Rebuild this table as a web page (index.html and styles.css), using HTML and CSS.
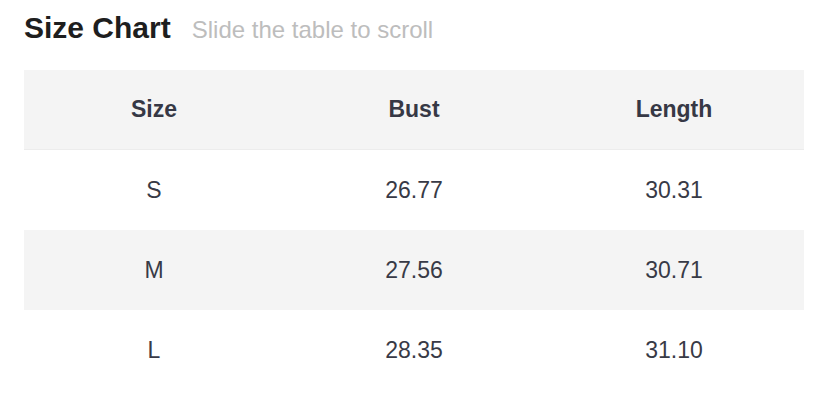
FILE: index.html
```html
<!DOCTYPE html>
<html>
<head>
<meta charset="utf-8">
<link rel="stylesheet" href="styles.css">
</head>
<body>
<div class="wrap">
  <div class="title-row">
    <h2 class="title">Size Chart</h2>
    <span class="hint">Slide the table to scroll</span>
  </div>
  <table class="chart">
    <thead>
      <tr><th>Size</th><th>Bust</th><th>Length</th></tr>
    </thead>
    <tbody>
      <tr><td>S</td><td>26.77</td><td>30.31</td></tr>
      <tr class="alt"><td>M</td><td>27.56</td><td>30.71</td></tr>
      <tr><td>L</td><td>28.35</td><td>31.10</td></tr>
    </tbody>
  </table>
</div>
</body>
</html>
```
FILE: styles.css
```css
html, body {
  margin: 0;
  padding: 0;
  background: #fff;
}
body {
  font-family: "Liberation Sans", Arial, Helvetica, sans-serif;
}
.wrap {
  padding: 10px 24px 0 24px;
}
.title-row {
  display: flex;
  align-items: baseline;
  gap: 21px;
  height: 60px;
}
.title {
  margin: 0;
  font-size: 30px;
  font-weight: bold;
  color: #1e1e1e;
  line-height: 36px;
}
.hint {
  font-size: 24px;
  color: #bdbdbd;
}
.chart {
  width: 780px;
  border-collapse: collapse;
  table-layout: fixed;
}
.chart th, .chart td {
  width: 260px;
  text-align: center;
  padding: 0;
  height: 80px;
  font-size: 23px;
  color: #383a46;
}
.chart th {
  background: #f4f4f4;
  font-weight: bold;
  color: #363845;
  height: 79px;
  border-bottom: 1px solid #ececec;
}
.chart tr.alt td {
  background: #f4f4f4;
}
```
